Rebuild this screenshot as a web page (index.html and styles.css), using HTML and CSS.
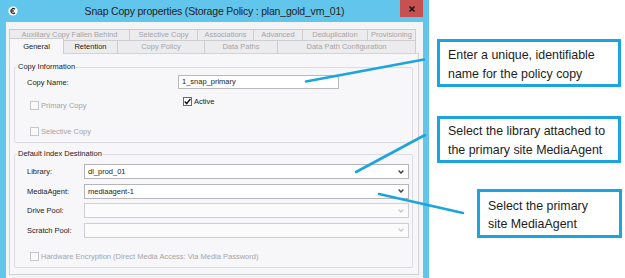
FILE: index.html
```html
<!DOCTYPE html>
<html lang="en">
<head>
  <meta charset="UTF-8">
  <meta name="viewport" content="width=device-width, initial-scale=1">
  <title>Snap Copy properties</title>
  <link rel="stylesheet" href="styles.css">
</head>
<body>
<div class="stage">

  <div class="window">
    <div class="titlebar">
      <span class="app-icon">
        <svg viewBox="0 0 10 10" width="10" height="10">
          <circle cx="5" cy="5" r="4.6" fill="#fff"/>
          <path d="M7 3.2 A2.4 2.4 0 1 0 7 6.8" fill="none" stroke="#2a2a2a" stroke-width="1.3"/>
          <circle cx="5" cy="5" r="0.9" fill="#2a2a2a"/>
        </svg>
      </span>
      <span class="title">Snap Copy properties (Storage Policy : plan_gold_vm_01)</span>
      <span class="close">
        <svg viewBox="0 0 8 8" width="8" height="8">
          <path d="M1.5 1.5 L6.5 6.5 M6.5 1.5 L1.5 6.5" stroke="#1a1a1a" stroke-width="1.7"/>
        </svg>
      </span>
    </div>

    <div class="client">
      <!-- two rows of tabs, back row first -->
      <div class="tab-row back">
        <div class="tab off" style="width:121px">Auxiliary Copy Fallen Behind</div>
        <div class="tab off" style="width:69px">Selective Copy</div>
        <div class="tab off" style="width:57px">Associations</div>
        <div class="tab off" style="width:50px">Advanced</div>
        <div class="tab off" style="width:66px">Deduplication</div>
        <div class="tab off" style="width:49px">Provisioning</div>
      </div>
      <div class="tab-row front">
        <div class="tab active" style="width:55px">General</div>
        <div class="tab" style="width:55px">Retention</div>
        <div class="tab off" style="width:88px">Copy Policy</div>
        <div class="tab off" style="width:74px">Data Paths</div>
        <div class="tab off" style="width:139px">Data Path Configuration</div>
      </div>

      <div class="panel">
        <fieldset class="group copy-info">
          <legend>Copy Information</legend>
          <div class="name-row">
            <label class="name-label">Copy Name:</label>
            <div class="textbox">1_snap_primary</div>
          </div>
          <div class="check-row">
            <div class="check disabled primary">
              <span class="box"></span>Primary Copy
            </div>
            <div class="check">
              <span class="box on">
                <svg viewBox="0 0 9 9" width="9" height="9">
                  <path d="M1.8 4.6 L3.7 6.6 L7.4 1.9" fill="none" stroke="#111" stroke-width="1.5"/>
                </svg>
              </span>Active
            </div>
          </div>
          <div class="check disabled selective">
            <span class="box"></span>Selective Copy
          </div>
        </fieldset>

        <fieldset class="group index-dest">
          <legend>Default Index Destination</legend>
          <div class="combo-grid">
            <label>Library:</label>
            <div class="combo"><span>dl_prod_01</span>
              <svg class="chev" viewBox="0 0 6 4" width="6" height="4"><path d="M0.6 0.6 L3 3.1 L5.4 0.6" fill="none" stroke="currentColor" stroke-width="1.4"/></svg>
            </div>
            <label>MediaAgent:</label>
            <div class="combo"><span>mediaagent-1</span>
              <svg class="chev" viewBox="0 0 6 4" width="6" height="4"><path d="M0.6 0.6 L3 3.1 L5.4 0.6" fill="none" stroke="currentColor" stroke-width="1.4"/></svg>
            </div>
            <label>Drive Pool:</label>
            <div class="combo disabled"><span></span>
              <svg class="chev" viewBox="0 0 6 4" width="6" height="4"><path d="M0.6 0.6 L3 3.1 L5.4 0.6" fill="none" stroke="currentColor" stroke-width="1.2"/></svg>
            </div>
            <label>Scratch Pool:</label>
            <div class="combo disabled"><span></span>
              <svg class="chev" viewBox="0 0 6 4" width="6" height="4"><path d="M0.6 0.6 L3 3.1 L5.4 0.6" fill="none" stroke="currentColor" stroke-width="1.2"/></svg>
            </div>
          </div>
          <div class="check disabled hw">
            <span class="box"></span>Hardware Encryption (Direct Media Access: Via Media Password)
          </div>
        </fieldset>
      </div>
    </div>
  </div>

  <div class="notes">
    <div class="note note-name">Enter a unique, identifiable<br>name for the policy copy</div>
    <div class="note note-library">Select the library attached to<br>the primary site MediaAgent</div>
    <div class="note note-agent">Select the primary<br>site MediaAgent</div>
  </div>

  <!-- leader lines from the callouts to the fields -->
  <svg class="leaders" width="625" height="278" viewBox="0 0 625 278">
    <line x1="306" y1="81.5" x2="424" y2="59.5"/>
    <line x1="356" y1="172" x2="425" y2="135"/>
    <line x1="379" y1="194" x2="463" y2="213"/>
  </svg>

</div>
</body>
</html>
```

FILE: styles.css
```css
:root {
  --frame: #62c6ec;
  --callout: #1ca4de;
  --panel: #f7f6f9;
  --ink: #1c1c1c;
  --muted: #a4a4a8;
}

body {
  margin: 0;
  background: #fff;
  font-family: 'Liberation Sans', Arial, sans-serif;
  color: var(--ink);
}

.stage {
  position: relative;
  display: flex;
  width: 625px;
  height: 278px;
  overflow: hidden;
}

/* ---- dialog window ---- */
.window {
  width: 429px;
  flex: none;
  box-sizing: border-box;
  padding: 0 6px;
  background: var(--frame);
  display: flex;
  flex-direction: column;
}

.titlebar {
  height: 22px;
  display: grid;
  grid-template-columns: 1fr auto 1fr;
  align-items: center;
}

.app-icon {
  display: flex;
  margin-left: 2px;
}

.title {
  font-size: 10.5px;
  letter-spacing: -0.2px;
  color: #222;
}

.close {
  justify-self: end;
  align-self: start;
  width: 23px;
  height: 17px;
  background: #c75050;
  display: flex;
  justify-content: center;
  align-items: center;
}

.client {
  flex: 1;
  background: #f3f4f6;
  padding: 7px 4px 0 3px;
  font-size: 7.5px;
}

/* tabs */
.tab-row {
  display: flex;
}

.tab {
  box-sizing: border-box;
  margin-right: -1px;
  border: 1px solid #cdcdd0;
  border-bottom: none;
  background: #ececee;
  text-align: center;
  white-space: nowrap;
}

.back .tab {
  height: 11px;
  line-height: 10px;
}

.front .tab {
  height: 13px;
  line-height: 12px;
}

.tab.off {
  color: var(--muted);
}

.front .tab.active {
  position: relative;
  z-index: 1;
  height: 16px;
  margin-top: -2px;
  margin-bottom: -1px;
  line-height: 15px;
  background: var(--panel);
}

.panel {
  width: 410px;
  box-sizing: border-box;
  border: 1px solid #d3d3d6;
  background: var(--panel);
  padding: 0 5px 6px 4px;
}

/* group boxes */
.group {
  margin: 8px 0 0;
  padding: 0 0 6px;
  border: 1px solid #dddce2;
  border-radius: 2px;
  min-width: 0;
}

.group legend {
  margin-left: 2px;
  padding: 0 1px;
  line-height: 10px;
}

.index-dest {
  margin-top: 6px;
}

.name-row {
  display: flex;
  align-items: center;
  height: 14px;
  margin: 3px 0 0 12px;
}

.name-label {
  width: 151px;
}

.textbox {
  width: 161px;
  height: 14px;
  box-sizing: border-box;
  border: 1px solid #b9b9bd;
  background: #fff;
  padding-left: 3px;
  line-height: 12px;
}

.check-row {
  display: flex;
  align-items: flex-start;
  margin: 8px 0 0 15px;
}

.check {
  display: flex;
  align-items: center;
  gap: 2px;
  height: 9px;
  white-space: nowrap;
}

.check.primary {
  width: 153px;
  margin-top: 4px;
}

.check.selective {
  margin: 17px 0 0 15px;
}

.check.hw {
  margin: 14.5px 0 0 15px;
}

.box {
  width: 9px;
  height: 9px;
  box-sizing: border-box;
  border: 1px solid #c6c6ca;
  background: #fafafa;
  display: flex;
}

.box.on {
  border-color: #6a6a6e;
  background: #fff;
}

.box svg {
  margin: -1px;
}

.check.disabled {
  color: var(--muted);
}

/* combos */
.combo-grid {
  display: grid;
  grid-template-columns: 57px 325px;
  grid-auto-rows: 15px;
  row-gap: 4.5px;
  align-items: center;
  margin: 5px 0 0 12px;
}

.combo {
  height: 15px;
  box-sizing: border-box;
  border: 1px solid #b6b6ba;
  background: #fff;
  display: flex;
  align-items: center;
  justify-content: space-between;
  padding: 0 4px 0 3px;
  color: #444;
}

.combo span {
  color: var(--ink);
}

.combo.disabled {
  border-color: #cfcfd3;
  background: #fbfbfc;
  color: #c2c2c6;
}

/* ---- callouts ---- */
.notes {
  display: flex;
  flex-direction: column;
  align-items: flex-start;
  margin-left: 8px;
}

.note {
  box-sizing: border-box;
  border: 3px solid var(--callout);
  padding: 4px 8px 0;
  font-size: 12.4px;
  line-height: 19px;
  color: #1d1d1d;
  white-space: nowrap;
}

.note-name {
  width: 184px;
  height: 48px;
  margin-top: 39px;
}

.note-library {
  width: 184px;
  height: 47px;
  margin-top: 29px;
  padding-top: 3px;
}

.note-agent {
  width: 145px;
  height: 49px;
  margin: 26px 0 0 40px;
  padding-top: 5px;
  line-height: 18px;
}

.leaders {
  position: absolute;
  left: 0;
  top: 0;
  pointer-events: none;
}

.leaders line {
  stroke: var(--callout);
  stroke-width: 2.6;
  stroke-linecap: round;
}
```
